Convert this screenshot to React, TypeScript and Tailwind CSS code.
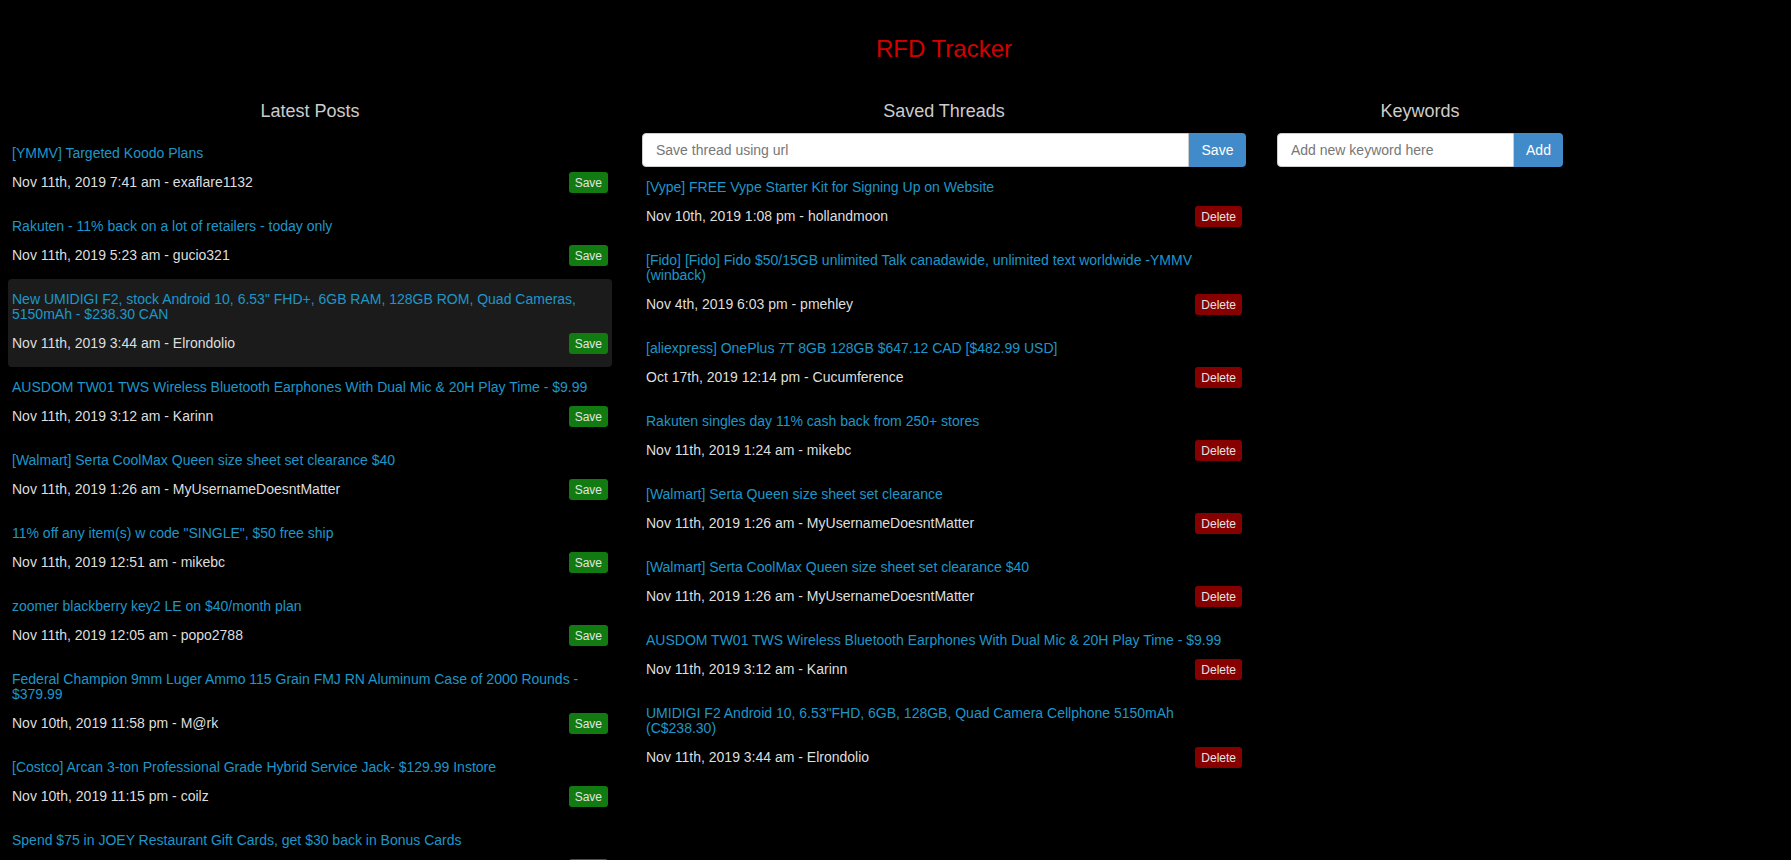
import { useState } from 'react'

type Post = { title: string; date: string; author: string }

const latest: Post[] = [
	{ title: '[YMMV] Targeted Koodo Plans', date: 'Nov 11th, 2019 7:41 am', author: 'exaflare1132' },
	{ title: 'Rakuten - 11% back on a lot of retailers - today only', date: 'Nov 11th, 2019 5:23 am', author: 'gucio321' },
	{
		title: 'New UMIDIGI F2, stock Android 10, 6.53" FHD+, 6GB RAM, 128GB ROM, Quad Cameras, 5150mAh - $238.30 CAN',
		date: 'Nov 11th, 2019 3:44 am',
		author: 'Elrondolio',
	},
	{
		title: 'AUSDOM TW01 TWS Wireless Bluetooth Earphones With Dual Mic & 20H Play Time - $9.99',
		date: 'Nov 11th, 2019 3:12 am',
		author: 'Karinn',
	},
	{ title: '[Walmart] Serta CoolMax Queen size sheet set clearance $40', date: 'Nov 11th, 2019 1:26 am', author: 'MyUsernameDoesntMatter' },
	{ title: '11% off any item(s) w code "SINGLE", $50 free ship', date: 'Nov 11th, 2019 12:51 am', author: 'mikebc' },
	{ title: 'zoomer blackberry key2 LE on $40/month plan', date: 'Nov 11th, 2019 12:05 am', author: 'popo2788' },
	{
		title: 'Federal Champion 9mm Luger Ammo 115 Grain FMJ RN Aluminum Case of 2000 Rounds - $379.99',
		date: 'Nov 10th, 2019 11:58 pm',
		author: 'M@rk',
	},
	{ title: '[Costco] Arcan 3-ton Professional Grade Hybrid Service Jack- $129.99 Instore', date: 'Nov 10th, 2019 11:15 pm', author: 'coilz' },
	{ title: 'Spend $75 in JOEY Restaurant Gift Cards, get $30 back in Bonus Cards', date: 'Nov 10th, 2019 10:52 pm', author: 'dealhunter' },
]

const saved: Post[] = [
	{ title: '[Vype] FREE Vype Starter Kit for Signing Up on Website', date: 'Nov 10th, 2019 1:08 pm', author: 'hollandmoon' },
	{
		title: '[Fido] [Fido] Fido $50/15GB unlimited Talk canadawide, unlimited text worldwide -YMMV (winback)',
		date: 'Nov 4th, 2019 6:03 pm',
		author: 'pmehley',
	},
	{ title: '[aliexpress] OnePlus 7T 8GB 128GB $647.12 CAD [$482.99 USD]', date: 'Oct 17th, 2019 12:14 pm', author: 'Cucumference' },
	{ title: 'Rakuten singles day 11% cash back from 250+ stores', date: 'Nov 11th, 2019 1:24 am', author: 'mikebc' },
	{ title: '[Walmart] Serta Queen size sheet set clearance', date: 'Nov 11th, 2019 1:26 am', author: 'MyUsernameDoesntMatter' },
	{ title: '[Walmart] Serta CoolMax Queen size sheet set clearance $40', date: 'Nov 11th, 2019 1:26 am', author: 'MyUsernameDoesntMatter' },
	{
		title: 'AUSDOM TW01 TWS Wireless Bluetooth Earphones With Dual Mic & 20H Play Time - $9.99',
		date: 'Nov 11th, 2019 3:12 am',
		author: 'Karinn',
	},
	{
		title: 'UMIDIGI F2 Android 10, 6.53"FHD, 6GB, 128GB, Quad Camera Cellphone 5150mAh (C$238.30)',
		date: 'Nov 11th, 2019 3:44 am',
		author: 'Elrondolio',
	},
]

function Thread({ post, action, active }: { post: Post; action: 'save' | 'delete'; active?: boolean }) {
	return (
		<div className={`px-[4px] pt-[13px] pb-[13px] rounded-[4px] ${active ? 'bg-[#1b1b1b]' : ''}`}>
			<a href="#" className="block text-[14px] leading-[15px] text-[#1d97c9]">
				{post.title}
			</a>
			<div className="mt-[11px] flex items-center justify-between text-[14px] text-[#dedede]">
				<span>
					{post.date} - {post.author}
				</span>
				{action === 'save' ? (
					<button className="h-[21px] rounded-[3px] bg-[#117a11] px-[6px] text-[12px] text-[#e4e4e4]">Save</button>
				) : (
					<button className="h-[21px] rounded-[3px] bg-[#870000] px-[6px] text-[12px] text-[#e4e4e4]">Delete</button>
				)}
			</div>
		</div>
	)
}

function Heading({ children }: { children: string }) {
	return <h2 className="mt-[38px] mb-[11px] text-center text-[18px] leading-[21px] text-[#cccccc]">{children}</h2>
}

export default function App() {
	const [url, setUrl] = useState('')
	const [keyword, setKeyword] = useState('')

	return (
		<div className="min-h-screen overflow-hidden bg-black font-['Liberation_Sans',Arial,sans-serif]">
			<div className="w-[1888px] pt-[35px]">
				<h1 className="text-center text-[24px] leading-[28px] text-[#d40000]">RFD Tracker</h1>
				<div className="flex items-start">
					<section className="ml-[8px] w-[604px]">
						<Heading>Latest Posts</Heading>
						{latest.map((p, i) => (
							<Thread key={p.title} post={p} action="save" active={i === 2} />
						))}
					</section>
					<section className="ml-[30px] w-[604px]">
						<Heading>Saved Threads</Heading>
						<div className="flex h-[34px]">
							<input
								value={url}
								onChange={(e) => setUrl(e.target.value)}
								placeholder="Save thread using url"
								className="min-w-0 flex-1 rounded-l-[4px] border border-[#cccccc] bg-white px-[13px] text-[14px] text-[#333] placeholder:text-[#777] outline-none"
							/>
							<button className="w-[57px] rounded-r-[4px] bg-[#428bca] text-[14px] text-white">Save</button>
						</div>
						{saved.map((p) => (
							<Thread key={p.title} post={p} action="delete" />
						))}
					</section>
					<section className="ml-[31px] w-[286px]">
						<Heading>Keywords</Heading>
						<div className="flex h-[34px]">
							<input
								value={keyword}
								onChange={(e) => setKeyword(e.target.value)}
								placeholder="Add new keyword here"
								className="min-w-0 flex-1 rounded-l-[4px] border border-[#cccccc] bg-white px-[13px] text-[14px] text-[#333] placeholder:text-[#777] outline-none"
							/>
							<button className="w-[49px] rounded-r-[4px] bg-[#428bca] text-[14px] text-white">Add</button>
						</div>
					</section>
				</div>
			</div>
		</div>
	)
}
